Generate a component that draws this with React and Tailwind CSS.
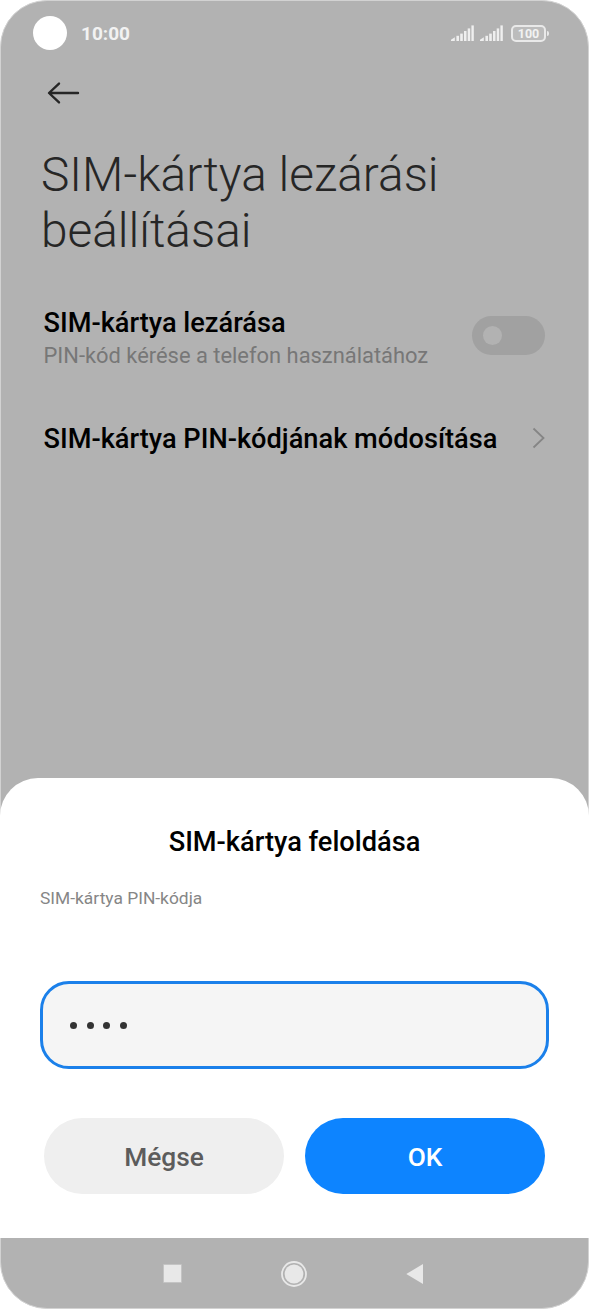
import React, { useState } from 'react';

const SignalIcon = () => (
  <svg width="24" height="18" viewBox="0 0 24 18" fill="#efefef">
    <path d="M1 17V15.8L4.8 13.2V17H1Z" />
    <rect x="6.4" y="11.8" width="2.6" height="5.2" />
    <rect x="10.2" y="9.6" width="2.6" height="7.4" />
    <rect x="14" y="7" width="2.5" height="10" />
    <rect x="17.7" y="4.4" width="2.5" height="12.6" />
    <rect x="21.4" y="1.4" width="2.4" height="15.6" />
  </svg>
);

const Battery = () => (
  <div className="flex items-center">
    <div className="flex h-[17px] w-[35px] items-center justify-center rounded-[5px] border-2 border-[#e9e9e9] bg-[#bcbcbc] pt-[2px] text-[12.5px] leading-none font-bold text-[#f2f2f2]">
      100
    </div>
    <div className="ml-px h-[5px] w-[2px] rounded-r-full bg-[#e9e9e9]"></div>
  </div>
);

const StatusBar = () => (
  <div className="flex h-[64px] items-center pl-8 pr-[39px]">
    <div className="h-[34px] w-[34px] rounded-full bg-white"></div>
    <span className="ml-[14px] text-[19px] leading-none font-bold text-[#f2f2f2]">10:00</span>
    <div className="ml-auto flex items-center">
      <SignalIcon />
      <div className="ml-[5px]">
        <SignalIcon />
      </div>
      <div className="ml-2">
        <Battery />
      </div>
    </div>
  </div>
);

const NavBar = () => (
  <nav className="flex h-[70px] items-center pt-px pl-[162px]">
    <div className="h-[19px] w-[19px] rounded-[1px] border border-[#c4c4c4] bg-[#e8e8e8]"></div>
    <svg className="ml-[99px]" width="26" height="26" viewBox="0 0 26 26">
      <circle cx="13" cy="13" r="12" fill="none" stroke="#e8e8e8" strokeWidth="1.8" />
      <circle cx="13" cy="13" r="9.4" fill="#e8e8e8" />
    </svg>
    <svg className="ml-[99px]" width="18" height="20" viewBox="0 0 18 20">
      <path d="M0.3 10L17 0V20Z" fill="#e8e8e8" />
    </svg>
  </nav>
);

const App = () => {
  const [locked, setLocked] = useState(false);
  const [pin, setPin] = useState(['1', '2', '3', '4']);

  return (
    <div className="flex h-[1309px] w-[589px] flex-col rounded-[47px] border border-[#d2d2d2] bg-[#b2b2b2] font-['Roboto',sans-serif]">
      <StatusBar />

      {/* Settings page */}
      <main className="flex-1 pt-[15px]">
        <button type="button" className="ml-[46px] block">
          <svg width="34" height="26" viewBox="0 0 34 26" fill="none" stroke="#262626" strokeWidth="2.4" strokeLinecap="round" strokeLinejoin="round">
            <path d="M31 13H2.2M12 3.6L2 13L12 22.4" />
          </svg>
        </button>

        <h1 className="mt-[41px] ml-[40px] text-[47.8px] leading-[56px] font-light text-[#262626]">
          SIM-kártya lezárási
          <br />
          beállításai
        </h1>

        <div className="mt-[47px] flex items-center justify-between pl-[42.5px] pr-[43px]">
          <div>
            <div className="text-[27.2px] leading-[34px] font-medium text-black">SIM-kártya lezárása</div>
            <div className="text-[21.9px] leading-[32px] text-[#777]">PIN-kód kérése a telefon használatához</div>
          </div>
          <button
            type="button"
            onClick={() => setLocked(!locked)}
            className="mt-[-7px] flex h-[39px] w-[73px] items-center rounded-full bg-[#a1a1a1] pl-[11px]"
          >
            <span className="h-[19px] w-[19px] rounded-full bg-[#b2b2b2]"></span>
          </button>
        </div>

        <div className="mt-[50px] flex items-center justify-between pl-[42.5px] pr-[43px]">
          <div className="text-[27.2px] leading-[34px] font-medium text-black">SIM-kártya PIN-kódjának módosítása</div>
          <svg className="mt-[-2px]" width="13" height="22" viewBox="0 0 13 22" fill="none" stroke="#858585" strokeWidth="1.8">
            <path d="M1.5 1.5L11.5 11L1.5 20.5" />
          </svg>
        </div>
      </main>

      {/* PIN dialog */}
      <section className="mx-[-1px] h-[460px] rounded-t-[38px] bg-white px-10 pt-[47px]">
        <h2 className="text-center text-[27.2px] leading-[34px] font-medium text-black">SIM-kártya feloldása</h2>
        <p className="mt-[27px] text-[17.4px] leading-6 text-[#868686]">SIM-kártya PIN-kódja</p>

        <div className="mt-[71px] flex h-[88px] items-center gap-[9.5px] rounded-[29px] border-[3px] border-[#1b80ea] bg-[#f5f5f5] pt-px pl-[27px]">
          {pin.map((digit, i) => (
            <span key={i} className="h-[7.5px] w-[7px] rounded-full bg-[#333]"></span>
          ))}
        </div>

        <div className="mt-[49px] flex gap-[21px] pl-[4px] pr-[4px]">
          <button
            type="button"
            onClick={() => setPin([])}
            className="h-[76px] flex-1 rounded-full bg-[#efefef] pt-[3px] text-[26.3px] font-medium text-[#5c5c5c]"
          >
            Mégse
          </button>
          <button type="button" className="h-[76px] flex-1 rounded-full bg-[#0d84ff] pt-[3px] text-[26.3px] font-medium text-white">
            OK
          </button>
        </div>
      </section>

      <NavBar />
    </div>
  );
};

export default App;
